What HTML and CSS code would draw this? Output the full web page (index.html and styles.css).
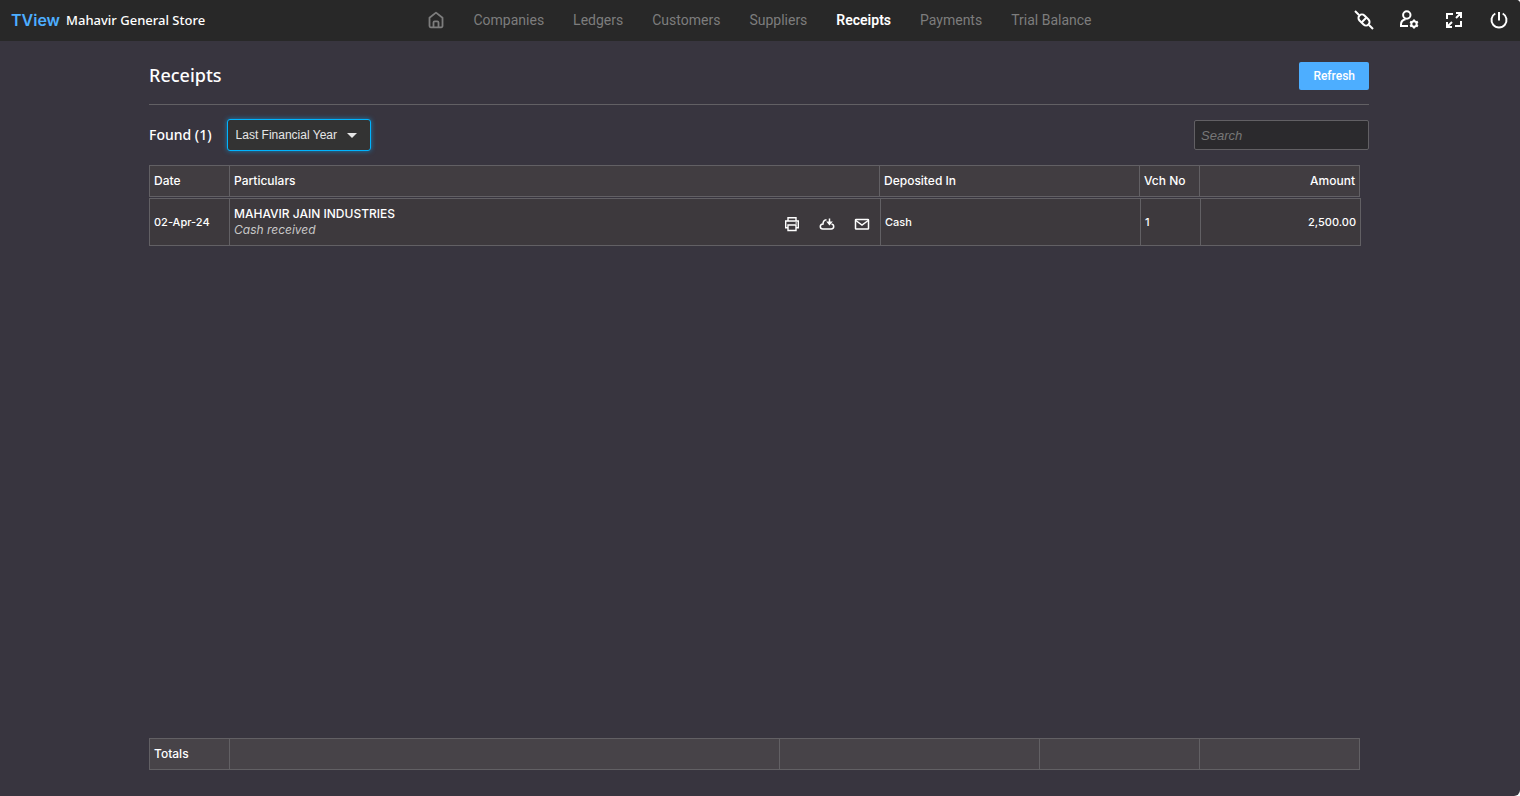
FILE: index.html
```html
<!DOCTYPE html>
<html lang="en">
<head>
    <meta charset="UTF-8">
    <meta name="viewport" content="width=device-width, initial-scale=1.0">
    <title>TView - Receipts</title>
    <link rel="stylesheet" href="styles.css">
</head>
<body>
    <div class="app">
        <header class="topbar">
            <div class="brand">
                <span class="brand__logo">TView</span>
                <span class="brand__company">Mahavir General Store</span>
            </div>
            <nav class="nav">
                <a href="#" class="nav__home" aria-label="Home">
                    <svg width="16" height="18" viewBox="0 0 16 18" fill="none" stroke="currentColor" stroke-width="1.8" stroke-linejoin="round"><path d="M1.500 6.800 8 1.600l6.500 5.200v8.300a1.200 1.200 0 0 1-1.200 1.200H2.700a1.200 1.200 0 0 1-1.200-1.200z"/><path d="M5.500 16v-4.500a1.200 1.200 0 0 1 1.200-1.200h2.600a1.200 1.200 0 0 1 1.200 1.200V16"/></svg>
                </a>
                <a href="#">Companies</a>
                <a href="#">Ledgers</a>
                <a href="#">Customers</a>
                <a href="#">Suppliers</a>
                <a href="#" class="nav--active">Receipts</a>
                <a href="#">Payments</a>
                <a href="#">Trial Balance</a>
            </nav>
            <div class="tools">
                <button aria-label="Connection">
                    <svg width="20" height="20" viewBox="0 0 20 20" fill="none" stroke="currentColor" stroke-width="2"><path d="M1 1l4 4M15 15l4 4M12.200 7.800 7.800 12.200"/><rect x="3.600" y="6.500" width="12.800" height="7" rx="3.500" transform="rotate(45 10 10)"/></svg>
                </button>
                <button aria-label="User settings">
                    <svg width="20" height="20" viewBox="0 0 20 20" fill="none" stroke="currentColor" stroke-width="2"><circle cx="7.800" cy="5" r="3.700"/><path d="M9 16H2v-1.500c0-3 1.900-4.700 4.600-5.200"/><circle cx="15" cy="14" r="2.700"/><path d="M15 9.500v2M15 16.500v2M11.100 11.700l1.700 1M17.200 15.300l1.700 1M11.100 16.300l1.700-1M17.200 12.700l1.700-1"/></svg>
                </button>
                <button aria-label="Full screen">
                    <svg width="20" height="20" viewBox="0 0 20 20" fill="none" stroke="currentColor" stroke-width="2"><path d="M3 9V4h6M17 11v5h-6M12 8l5-5M12 3h5v5M8 12l-5 5M3 12v5h5"/></svg>
                </button>
                <button aria-label="Log out">
                    <svg width="20" height="20" viewBox="0 0 20 20" fill="none" stroke="currentColor" stroke-width="2"><path d="M10 2v8.500M6.300 3.500a7.500 7.500 0 1 0 7.400 0"/></svg>
                </button>
            </div>
        </header>

        <main class="page">
            <div class="page__head">
                <h1>Receipts</h1>
                <button class="btn">Refresh</button>
            </div>

            <div class="filters">
                <label class="filters__count" for="period">Found (1)</label>
                <div class="select">
                    <select id="period">
                        <option>Last Financial Year</option>
                        <option>Current Financial Year</option>
                    </select>
                    <svg class="select__arrow" width="10" height="5" viewBox="0 0 10 5" fill="currentColor"><path d="M0 0h10L5 5z"/></svg>
                </div>
                <input class="search" type="search" placeholder="Search" aria-label="Search">
            </div>

            <table class="grid grid--head">
                <colgroup>
                    <col class="col-date"><col><col class="col-deposit"><col class="col-vch"><col class="col-amount">
                </colgroup>
                <thead>
                    <tr>
                        <th>Date</th>
                        <th>Particulars</th>
                        <th>Deposited In</th>
                        <th>Vch No</th>
                        <th class="num">Amount</th>
                    </tr>
                </thead>
            </table>
            <div class="grid-scroll">
                <table class="grid grid--body">
                    <colgroup>
                        <col class="col-date"><col><col class="col-deposit"><col class="col-vch"><col class="col-amount">
                    </colgroup>
                    <tbody>
                        <tr>
                            <td>02-Apr-24</td>
                            <td>
                                <div class="party">
                                    <div>
                                        <div class="party__name">MAHAVIR JAIN INDUSTRIES</div>
                                        <div class="party__note">Cash received</div>
                                    </div>
                                    <div class="party__actions">
                                        <button aria-label="Print">
                                            <svg width="16" height="16" viewBox="0 0 16 16" fill="none" stroke="currentColor" stroke-width="1.400"><path d="M4 5V1.700h8V5M4 11.700H1.700V5h12.600v6.700H12"/><path d="M4 9h8v5.500H4z"/><path d="M11.500 7h1.300"/></svg>
                                        </button>
                                        <button aria-label="Download">
                                            <svg width="16" height="16" viewBox="0 0 16 16" fill="none" stroke="currentColor" stroke-width="1.500"><path d="M7.500 3.700C5 4 4 5.500 4 8c-1.800.2-2.700 1.300-2.700 2.500 0 1.400 1 2.500 2.500 2.500h8.400c1.500 0 2.500-1 2.500-2.400 0-1.300-1-2.300-2.200-2.500"/><path d="M10.500 2.500V8"/><path fill="currentColor" stroke="none" d="M7.200 5.500h6.600l-3.300 4z"/></svg>
                                        </button>
                                        <button aria-label="Email">
                                            <svg width="16" height="16" viewBox="0 0 16 16" fill="none" stroke="currentColor" stroke-width="1.500"><rect x="1.500" y="3.500" width="13" height="9.500" rx="0.600"/><path d="M1.800 4.500 8 9l6.200-4.500"/></svg>
                                        </button>
                                    </div>
                                </div>
                            </td>
                            <td>Cash</td>
                            <td>1</td>
                            <td class="num">2,500.00</td>
                        </tr>
                    </tbody>
                </table>
            </div>
            <table class="grid grid--totals">
                <colgroup>
                    <col class="col-date"><col><col class="col-deposit"><col class="col-amount"><col class="col-amount">
                </colgroup>
                <tbody>
                    <tr>
                        <th scope="row">Totals</th>
                        <td></td>
                        <td></td>
                        <td></td>
                        <td></td>
                    </tr>
                </tbody>
            </table>
        </main>
    </div>
</body>
</html>
```

FILE: styles.css
```css
* {
    box-sizing: border-box;
}

body {
    margin: 0;
    background-color: #fff;
    color: #fff;
    font-family: Inter, "Liberation Sans", sans-serif;
    font-size: 11px;
    font-weight: 500;
}

button {
    padding: 0;
    border: none;
    background: none;
    color: inherit;
    cursor: pointer;
}

svg {
    display: block;
}

.app {
    display: flex;
    flex-direction: column;
    min-height: 100vh;
    border-radius: 0 4px 6px 0;
    overflow: hidden;
    background-color: #38353f;
}

/* Top bar */

.topbar {
    display: grid;
    grid-template-columns: 1fr auto 1fr;
    align-items: center;
    height: 41px;
    padding: 0 11px 2px;
    background-color: #282828;
}

.brand {
    display: flex;
    align-items: center;
    gap: 6px;
}

.brand__logo {
    color: #4daeff;
    font-size: 16px;
    font-weight: 600;
}

.brand__company {
    font-family: "Noto Sans", sans-serif;
    font-size: 13px;
}

.nav {
    display: flex;
    align-items: center;
    gap: 29px;
    font-family: Roboto, sans-serif;
    font-size: 14px;
}

.nav a {
    color: #7d7d7d;
    font-weight: 400;
    text-decoration: none;
}

.nav a.nav--active {
    color: #fff;
    font-weight: 600;
}

.tools {
    display: flex;
    justify-content: flex-end;
    gap: 25px;
}

/* Page */

.page {
    display: flex;
    flex: 1;
    flex-direction: column;
    width: 100%;
    max-width: 1222px;
    margin: 0 auto;
    padding: 0 2px 26px 0;
}

.page__head {
    display: flex;
    align-items: center;
    justify-content: space-between;
    height: 64px;
    padding-top: 6px;
    border-bottom: 1px solid #626064;
}

h1 {
    margin: 0;
    padding-bottom: 2px;
    font-family: "Noto Sans", sans-serif;
    font-size: 18px;
    font-weight: 500;
    line-height: 28px;
}

.btn {
    height: 28px;
    padding: 0 14px;
    border-radius: 2px;
    background-color: #4daeff;
    font-family: Roboto, sans-serif;
    font-size: 12px;
    font-weight: 500;
}

.filters {
    display: flex;
    align-items: center;
    height: 60px;
}

.filters__count {
    margin-right: 15px;
    padding-bottom: 2px;
    font-family: "Noto Sans", sans-serif;
    font-size: 14px;
}

.select {
    position: relative;
}

.select select {
    width: 144px;
    height: 32px;
    padding: 0 8px;
    border: 1px solid #00b4ff;
    border-radius: 3px;
    outline: none;
    box-shadow: 0 0 5px #1c7fb8;
    appearance: none;
    background-color: #333;
    color: #e6e6e6;
    font-family: "Liberation Sans", sans-serif;
    font-size: 12px;
}

.select__arrow {
    position: absolute;
    top: 14px;
    right: 14px;
    color: #e6e6e6;
    pointer-events: none;
}

.search {
    width: 175px;
    height: 30px;
    margin-left: auto;
    padding: 0 6px;
    border: 1px solid #626064;
    border-radius: 2px;
    background-color: #2b2a2d;
    color: #fff;
    font-family: "Liberation Sans", sans-serif;
    font-size: 13px;
}

.search::placeholder {
    color: #777;
    font-style: italic;
}

.grid {
    width: calc(100% - 9px);
    table-layout: fixed;
    border-collapse: collapse;
    background-color: #413d41;
}

.grid th,
.grid td {
    height: 31px;
    padding: 0 4px;
    border: 1px solid #626064;
    font-weight: 500;
    text-align: left;
}

.grid th {
    padding-bottom: 1px;
    font-size: 12px;
}

.grid .num {
    text-align: right;
}

.grid--body {
    width: calc(100% - 8px);
    background-color: #3d393d;
}

.grid--body td {
    height: 47px;
}

.grid--totals {
    background-color: #474348;
}

.grid-scroll {
    flex: 1;
    padding-top: 1px;
}

.col-date {
    width: 80px;
}

.col-deposit {
    width: 260px;
}

.col-vch {
    width: 60px;
}

.col-amount {
    width: 160px;
}

.party {
    display: flex;
    align-items: center;
    justify-content: space-between;
    font-size: 12px;
    line-height: 16px;
}

.party__note {
    color: #c8c8c8;
    font-style: italic;
    font-weight: 400;
}

.party__actions {
    display: flex;
    gap: 19px;
    padding: 4px 6px 0 0;
}
```
